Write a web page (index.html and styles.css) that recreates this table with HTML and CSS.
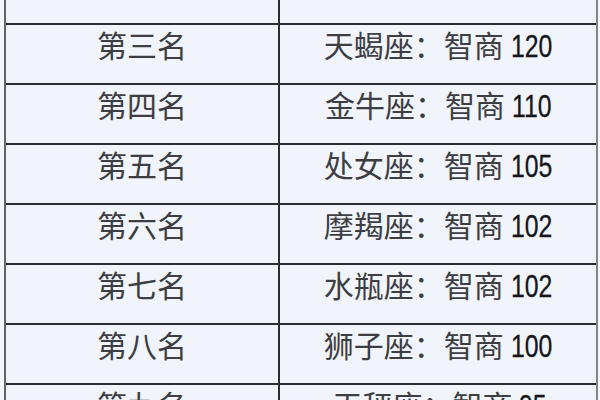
FILE: index.html
```html
<!DOCTYPE html>
<html lang="zh-CN">
<head>
<meta charset="utf-8">
<title>星座智商排名</title>
<link rel="stylesheet" href="styles.css">
</head>
<body>
<div class="viewport">
  <div class="sheet">
    <div class="row"><div class="cell rank"></div><div class="cell score"></div></div>
    <div class="row"><div class="cell rank">第三名</div><div class="cell score">天蝎座：智商 <span class="num">120</span></div></div>
    <div class="row"><div class="cell rank">第四名</div><div class="cell score">金牛座：智商 <span class="num">110</span></div></div>
    <div class="row"><div class="cell rank">第五名</div><div class="cell score">处女座：智商 <span class="num">105</span></div></div>
    <div class="row"><div class="cell rank">第六名</div><div class="cell score">摩羯座：智商 <span class="num">102</span></div></div>
    <div class="row"><div class="cell rank">第七名</div><div class="cell score">水瓶座：智商 <span class="num">102</span></div></div>
    <div class="row"><div class="cell rank">第八名</div><div class="cell score">狮子座：智商 <span class="num">100</span></div></div>
    <div class="row"><div class="cell rank">第九名</div><div class="cell score">天秤座：智商 <span class="num">95</span></div></div>
  </div>
</div>
</body>
</html>
```
FILE: styles.css
```css
html, body {
  margin: 0;
  padding: 0;
  background: #f4f6fb;
}
.viewport {
  width: 600px;
  height: 400px;
  overflow: hidden;
  background: #f4f6fb;
}
.sheet {
  margin-top: -37px;
  margin-left: 4px;
  width: 590px;
  border-left: 2px solid #5f646c;
  border-right: 2px solid #7d828b;
  background: #f1f4fb;
}
.row {
  display: grid;
  grid-template-columns: 274px 1fr;
  border-top: 2px solid #2c2d30;
  height: 58px;
}
.cell {
  font-family: "Noto Sans CJK SC", "Noto Sans", sans-serif;
  font-size: 30px;
  line-height: 36px;
  padding-top: 1px;
  color: #3d3e42;
  text-align: center;
  white-space: nowrap;
}
.rank {
  border-right: 2px solid #2c2d30;
}
.num {
  display: inline-block;
  font-family: "Liberation Sans", Arial, sans-serif;
  font-size: 31px;
  color: #16171a;
  transform: scaleX(0.8);
  transform-origin: left center;
  margin-right: -10px;
  -webkit-text-stroke: 0.3px #16171a;
}
```
